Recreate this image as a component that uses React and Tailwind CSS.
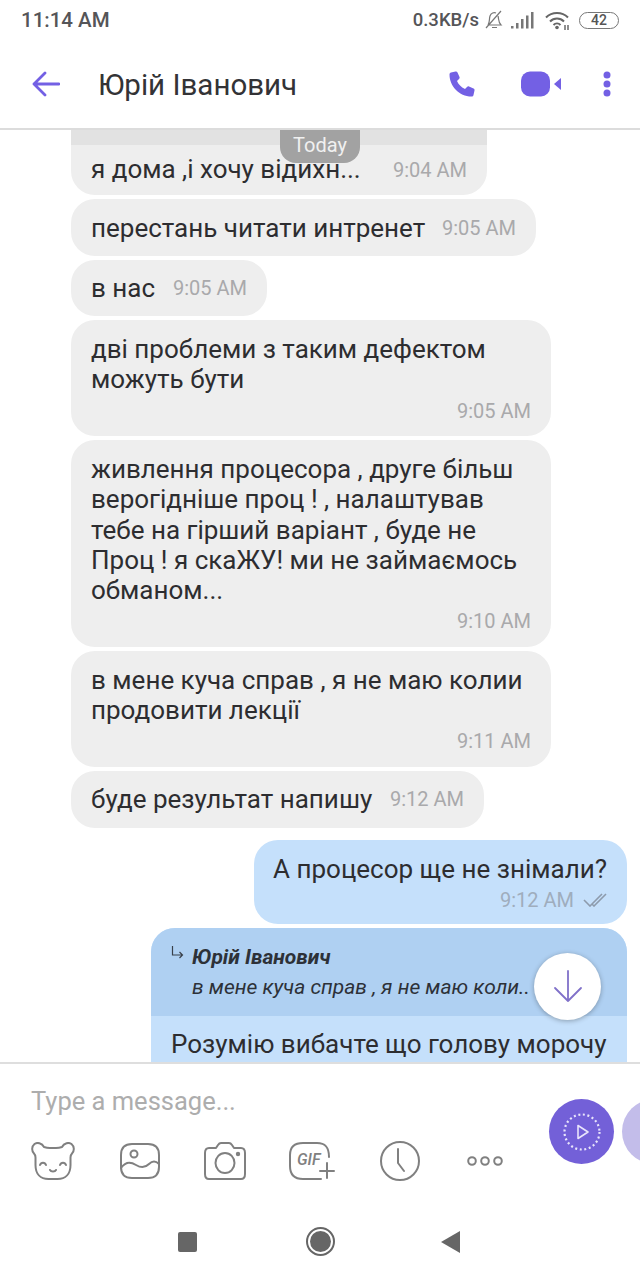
const INK = "text-[#2d2d30]";

function Time({ children }) {
  return <span className="text-[20px] leading-[30px] text-[#a9a9ab] whitespace-nowrap">{children}</span>;
}

function Inline({ text, time, w, h }) {
  return (
    <div className={`flex items-center justify-between ${h} ${w} rounded-[24px] bg-[#eeeeee] px-5 shrink-0`}>
      <span className={`text-[26px] leading-[30px] ${INK} whitespace-nowrap`}>{text}</span>
      <Time>{time}</Time>
    </div>
  );
}

function Block({ lines, time }) {
  return (
    <div className="w-[480px] rounded-[24px] bg-[#eeeeee] pl-5 pr-5 pt-[14px] pb-[10.5px] shrink-0">
      {lines.map((l) => (
        <div key={l} className={`text-[26px] leading-[30.25px] ${INK} whitespace-nowrap`}>{l}</div>
      ))}
      <div className="flex justify-end mt-[1px]"><Time>{time}</Time></div>
    </div>
  );
}

const S = { fill: "none", stroke: "#808080", strokeWidth: 2, strokeLinecap: "round", strokeLinejoin: "round" };

function Bear() {
  return (
    <svg width="44" height="38" viewBox="0 0 44 38" {...S}>
      <path d="M13 5C11 1 6 0 3.500 2 .5 4.500.5 9 3 11.500c1 1 1.500 2 1.500 4V23c0 9 5 14 13 14h9c8 0 13-5 13-14v-7.500c0-2 .5-3 1.500-4C43.500 9 43.500 4.500 40.500 2 38 0 33 1 31 5c-2 .7-4 1-6 1h-6c-2 0-4-.3-6-1z" />
      <path d="M9 23c1-3 5-3 6 0M29 23c1-3 5-3 6 0M19 28c1 2 5 2 6 0" />
    </svg>
  );
}
function Picture() {
  return (
    <svg width="40" height="36" viewBox="0 0 40 36" {...S}>
      <path d="M12 1h16c7 0 11 4 11 11v12c0 7-4 11-11 11H12C5 35 1 31 1 24V12C1 5 5 1 12 1z" />
      <circle cx="14" cy="11" r="3.500" />
      <path d="M1 25c5-7 10-6 15-3s9 3 13-1 7-3 10 0" />
    </svg>
  );
}
function Camera() {
  return (
    <svg width="42" height="38" viewBox="0 0 42 38" {...S}>
      <path d="M5 6h7l2-3c1-1.500 2-2 3-2h8c1 0 2 .5 3 2l2 3h7c2.500 0 4 2 4 5v21c0 3-1.500 5-4 5H5c-2.500 0-4-2-4-5V11c0-3 1.500-5 4-5z" />
      <ellipse cx="21" cy="21" rx="9.500" ry="10" />
      <circle cx="34" cy="12" r="1.200" fill="#808080" />
    </svg>
  );
}
function Gif() {
  return (
    <div className="relative w-[46px] h-[38px]">
      <svg width="46" height="38" viewBox="0 0 46 38" {...S}>
        <path d="M32 37H14C5 37 1 32 1 24V13C1 5 5 1 14 1h14c9 0 12 5 12 14" />
        <path d="M38 21v15M31 29h14" />
      </svg>
      <span className="absolute left-[8px] top-[9px] text-[16px] leading-[18px] italic font-medium text-[#808080]">GIF</span>
    </div>
  );
}
function Clock() {
  return (
    <svg width="40" height="40" viewBox="0 0 40 40" {...S}>
      <circle cx="20" cy="20" r="19" />
      <path d="M18 8v14l6 8" />
    </svg>
  );
}
function More() {
  return (
    <svg width="36" height="10" viewBox="0 0 36 10" {...S}>
      <circle cx="5" cy="5" r="3.800" />
      <circle cx="18" cy="5" r="3.800" />
      <circle cx="31" cy="5" r="3.800" />
    </svg>
  );
}

export default function App() {
  return (
    <div className="w-[640px] h-[1280px] bg-white flex flex-col overflow-hidden font-['Roboto',sans-serif]">
      {/* status bar */}
      <div className="h-[40px] flex items-center justify-between pl-[21px] pr-[21px] shrink-0 text-[#555558]">
        <span className="text-[20.5px] font-medium leading-none">11:14 AM</span>
        <div className="flex items-center">
          <span className="text-[18.5px] font-medium leading-none">0.3KB/s</span>
          <svg className="ml-[6px]" width="18" height="20" viewBox="0 0 18 20" fill="none" stroke="#777" strokeWidth="1.200">
            <path d="M3 15c2-3 1-6 2-9s4-4 6-3M13 6c1 3 0 6 3 9H3M7 17.500h5M1 18 16 1" />
          </svg>
          <svg className="ml-[8px]" width="24" height="17" viewBox="0 0 24 17" fill="#777">
            <rect x="0" y="14" width="2.500" height="2.500" />
            <rect x="5" y="11" width="2.500" height="5.500" />
            <rect x="10" y="7" width="2.500" height="9.500" />
            <rect x="15" y="3.500" width="2.500" height="13" />
            <rect x="20" y="0" width="2.500" height="16.500" />
          </svg>
          <svg className="ml-[10px]" width="25" height="19" viewBox="0 0 25 19" fill="none" stroke="#666" strokeWidth="2">
            <path d="M1 6.500c6-6 16-6 22 0M5 10.500c4-4 10-4 14 0M8.500 14c2-2 5-2 7 0" />
            <circle cx="12" cy="16.500" r="1.800" fill="#666" stroke="none" />
            <path d="M20 14v5M23 14v5" strokeWidth="1.200" stroke="#444" />
          </svg>
          <div className="ml-[9px] w-[40px] h-[17px] rounded-full border border-[#777] flex items-center justify-center text-[14px] font-medium leading-none text-[#555]">42</div>
        </div>
      </div>

      {/* header */}
      <div className="h-[90px] shrink-0 flex items-center border-b-2 border-[#dcdcdc] bg-white relative z-10">
        <svg className="ml-[32px]" width="28" height="26" viewBox="0 0 28 26" fill="none" stroke="#7360e4" strokeWidth="2.800" strokeLinecap="round" strokeLinejoin="round">
          <path d="M27 13H2M13 2 2 13l11 11" />
        </svg>
        <span className="ml-[38px] mt-[3px] text-[29.5px] leading-none text-[#333336] flex-1">Юрій Іванович</span>
        <svg className="mr-[46px]" width="26" height="26" viewBox="0 0 26 26" fill="#7360e4">
          <path d="M2 1.500 6.500.5c1-.2 1.700.3 2 1L10.500 6c.3.800.1 1.500-.5 2L8 10c1.500 3.500 4 6 8 8l2-2c.6-.6 1.300-.8 2-.5l4.500 2c.8.4 1.200 1.100 1 2L24.500 24c-.2 1-1 1.500-2 1.500C10 25.500.5 15 .5 3.500c0-1 .6-1.800 1.500-2z" />
        </svg>
        <svg className="mr-[41px]" width="41" height="26" viewBox="0 0 41 26" fill="#7360e4">
          <rect x="0" y="0.500" width="29" height="25" rx="9" />
          <path d="M40 7v12l-7-6z" />
        </svg>
        <svg className="mr-[29px]" width="8" height="26" viewBox="0 0 8 26" fill="#7360e4">
          <circle cx="4" cy="4" r="3.500" />
          <circle cx="4" cy="13" r="3.500" />
          <circle cx="4" cy="22" r="3.500" />
        </svg>
      </div>

      {/* chat */}
      <div className="relative h-[932px] shrink-0 overflow-hidden flex flex-col gap-1">
        <div className="absolute left-[280px] top-0 w-[80px] h-[33px] rounded-b-[16px] bg-[#a2a2a2] text-[#f0f0f0] text-[20px] leading-[30px] text-center">Today</div>

        <div className="ml-[71px] w-[416px] h-[65px] shrink-0 rounded-b-[24px] bg-[#eeeeee] overflow-hidden">
          <div className="h-[15px] bg-[#e2e2e2]" />
          <div className="flex items-center justify-between px-5 h-[50px]">
            <span className={`text-[26px] leading-[30px] pb-[3px] ${INK} whitespace-nowrap`}>я дома ,і хочу відихн...</span>
            <Time>9:04 AM</Time>
          </div>
        </div>

        <div className="ml-[71px] flex flex-col gap-1 items-start">
          <Inline text="перестань читати интренет" time="9:05 AM" w="w-[465px]" h="h-[57px]" />
          <Inline text="в нас" time="9:05 AM" w="w-[196px]" h="h-[56px]" />
          <Block lines={["дві проблеми з таким дефектом", "можуть бути"]} time="9:05 AM" />
          <Block lines={["живлення процесора , друге більш", "верогідніше проц ! , налаштував", "тебе на гірший варіант , буде не", "Проц ! я скаЖУ! ми не займаємось", "обманом..."]} time="9:10 AM" />
          <Block lines={["в мене куча справ , я не маю колии", "продовити лекції"]} time="9:11 AM" />
          <Inline text="буде результат напишу" time="9:12 AM" w="w-[413px]" h="h-[57px]" />
        </div>

        <div className="mt-[8px] self-end mr-[13px] w-[373px] h-[84px] shrink-0 rounded-[24px] bg-[#c5e0fb] px-5 pt-[14px] flex flex-col items-end">
          <div className={`text-[26px] leading-[30px] ${INK} whitespace-nowrap`}>А процесор ще не знімали?</div>
          <div className="flex items-center gap-[9px] mt-px">
            <span className="text-[20px] leading-[30px] text-[#9fadbd]">9:12 AM</span>
            <svg width="24" height="14" viewBox="0 0 24 14" fill="none" stroke="#8d9bac" strokeWidth="1.600">
              <path d="M1 7l6 6L19 1M9 11l2 2L23 1" />
            </svg>
          </div>
        </div>

        <div className="self-end mr-[13px] w-[476px] shrink-0 rounded-t-[24px] bg-[#c5e0fb] overflow-hidden">
          <div className="h-[88px] bg-[#afd0f2] pl-5 pt-[14px] flex">
            <svg className="mt-[4px] shrink-0" width="13" height="13" viewBox="0 0 13 13" fill="none" stroke="#39404a" strokeWidth="1.200">
              <path d="M1.500 0v9h10M8.500 6l3 3-3 3" />
            </svg>
            <div className="ml-2">
              <div className="text-[21px] leading-[30px] font-bold italic text-[#2d3138] whitespace-nowrap">Юрій Іванович</div>
              <div className="text-[21px] leading-[30px] italic text-[#2d3138] whitespace-nowrap">в мене куча справ , я не маю коли..</div>
            </div>
          </div>
          <div className={`pl-5 pt-[13px] text-[26px] leading-[30px] ${INK} whitespace-nowrap h-[60px]`}>Розумію вибачте що голову морочу</div>
        </div>

        <div className="absolute left-[534px] top-[823px] w-[67px] h-[67px] rounded-full bg-white shadow-[0_1px_5px_rgba(0,0,0,0.3)] flex items-center justify-center">
          <svg width="30" height="33" viewBox="0 0 30 33" fill="none" stroke="#8071c9" strokeWidth="1.800" strokeLinecap="round" strokeLinejoin="round">
            <path d="M15 1v30M2 18l13 13 13-13" />
          </svg>
        </div>
      </div>

      {/* composer */}
      <div className="h-[146px] shrink-0 border-t-2 border-[#dedede] bg-white pl-[31px] flex overflow-hidden">
        <div className="w-[518px] shrink-0">
          <div className="mt-[22px] text-[25.5px] leading-[30px] text-[#adadad]">Type a message...</div>
          <div className="mt-[25px] flex items-center h-[40px]">
            <Bear />
            <div className="ml-[45px]"><Picture /></div>
            <div className="ml-[44px]"><Camera /></div>
            <div className="ml-[43px]"><Gif /></div>
            <div className="ml-[45px]"><Clock /></div>
            <div className="ml-[47px]"><More /></div>
          </div>
        </div>
        <div className="flex gap-2 mt-[35px] h-[65px] shrink-0">
          <div className="w-[65px] h-[65px] rounded-full bg-[#7360d8] flex items-center justify-center shrink-0">
            <svg width="38" height="38" viewBox="0 0 38 38" fill="none" stroke="#e8e4fb">
              <circle cx="19" cy="19" r="17.500" strokeWidth="2.200" strokeDasharray="2 2.600" />
              <path d="M15 12.500v13l10-6.500z" strokeWidth="1.600" strokeLinejoin="round" />
            </svg>
          </div>
          <div className="w-[65px] h-[65px] rounded-full bg-[#c3bdea] shrink-0" />
        </div>
      </div>

      {/* nav */}
      <div className="flex-1 flex items-start bg-white">
        <div className="ml-[178px] mt-[24px] w-[19px] h-[20px] rounded-[2px] bg-[#666666]" />
        <div className="ml-[109px] mt-[19px] w-[29px] h-[29px] rounded-full border-2 border-[#666666] flex items-center justify-center">
          <div className="w-[21px] h-[21px] rounded-full bg-[#666666]" />
        </div>
        <svg className="ml-[106px] mt-[23px]" width="19" height="22" viewBox="0 0 19 22" fill="#666666">
          <path d="M19 0v22L0 11z" />
        </svg>
      </div>
    </div>
  );
}
